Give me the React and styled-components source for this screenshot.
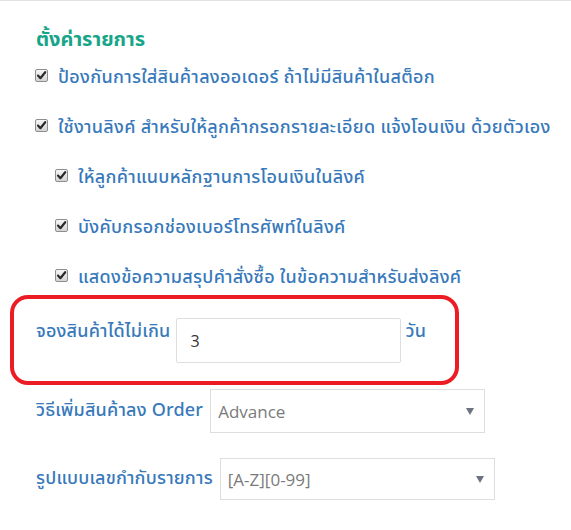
import React from 'react';
import styled, { createGlobalStyle } from 'styled-components';

const GlobalStyle = createGlobalStyle`
  body {
    margin: 0;
    background: #fff;
    border-top: 1px solid #e2e2e2;
  }
`;

const Page = styled.div`
  width: 571px;
  height: 529px;
  padding-left: 10px;
  box-sizing: border-box;
  font-family: "Noto Sans Thai", "Noto Sans Thai UI", "Noto Sans", sans-serif;
  overflow: hidden;
`;

const Title = styled.h2`
  margin: 26px 0 0 26px;
  font-size: 20px;
  line-height: 26px;
  font-weight: 700;
  color: #17a589;
`;

const Options = styled.div`
  padding-left: 25px;
  margin-top: 12px;
`;

const OptionRow = styled.label`
  display: flex;
  align-items: center;
  gap: 10px;
  height: 24px;
  margin-bottom: 26px;
  padding-left: ${p => (p.$sub ? 20 : 0)}px;
  font-size: 18px;
  letter-spacing: 0.3px;
  font-weight: 500;
  color: #3779ba;
  white-space: nowrap;
`;

const Box = styled.span`
  width: 13px;
  height: 13px;
  flex: none;
  box-sizing: border-box;
  border: 1px solid #8e8e8e;
  border-radius: 2px;
  background: linear-gradient(#f6f6f6, #d4d4d4);
  display: flex;
  align-items: center;
  justify-content: center;
  margin-top: -3px;
`;

const Check = () => (
  <Box>
    <svg width="11" height="11" viewBox="0 0 11 11">
      <path d="M2 5.6 L4.4 8.2 L9.2 2.2" fill="none" stroke="#2b2b2b" strokeWidth="2.2" strokeLinecap="round" strokeLinejoin="round" />
    </svg>
  </Box>
);

const ReserveBox = styled.div`
  width: 449px;
  margin-top: -20px;
  box-sizing: border-box;
  border: 4px solid #ec1c24;
  border-radius: 18px;
  padding: 19px 22px 18px;
  display: flex;
  align-items: flex-start;
  gap: ${p => p.$gap || 7}px;
`;

const FieldLabel = styled.span`
  font-size: 18px;
  letter-spacing: 0.2px;
  font-weight: 500;
  line-height: 28px;
  color: #3779ba;
  white-space: nowrap;
`;

const TextInput = styled.div`
  width: 225px;
  height: 45px;
  box-sizing: border-box;
  border: 1px solid #dedede;
  border-radius: 2px;
  padding-left: 14px;
  display: flex;
  align-items: center;
  font-family: "Open Sans", sans-serif;
  font-size: 16px;
  color: #333;
`;

const SelectRow = styled.div`
  display: flex;
  align-items: center;
  gap: 7px;
  margin: ${p => p.$top}px 0 0 26px;
`;

const Select = styled.div`
  width: 275px;
  height: ${p => p.$h}px;
  box-sizing: border-box;
  border: 1px solid #dedede;
  padding: 0 10px 0 7px;
  display: flex;
  align-items: center;
  justify-content: space-between;
  font-family: "Open Sans", sans-serif;
  font-size: 17px;
  color: #7a7a7a;
`;

const Arrow = styled.span`
  width: 0;
  height: 0;
  border-left: 4px solid transparent;
  border-right: 4px solid transparent;
  border-top: 7px solid #6b7280;
`;

const options = [
  { text: 'ป้องกันการใส่สินค้าลงออเดอร์ ถ้าไม่มีสินค้าในสต็อก' },
  { text: 'ใช้งานลิงค์ สำหรับให้ลูกค้ากรอกรายละเอียด แจ้งโอนเงิน ด้วยตัวเอง' },
  { text: 'ให้ลูกค้าแนบหลักฐานการโอนเงินในลิงค์', sub: true },
  { text: 'บังคับกรอกช่องเบอร์โทรศัพท์ในลิงค์', sub: true },
  { text: 'แสดงข้อความสรุปคำสั่งซื้อ ในข้อความสำหรับส่งลิงค์', sub: true },
];

export default function App() {
  return (
    <>
      <GlobalStyle />
      <Page>
        <Title>ตั้งค่ารายการ</Title>
        <Options>
          {options.map(o => (
            <OptionRow key={o.text} $sub={o.sub}>
              <Check />
              {o.text}
            </OptionRow>
          ))}
        </Options>
        <ReserveBox $gap={5}>
          <FieldLabel>จองสินค้าได้ไม่เกิน</FieldLabel>
          <TextInput>3</TextInput>
          <FieldLabel>วัน</FieldLabel>
        </ReserveBox>
        <SelectRow $top={4}>
          <FieldLabel>วิธีเพิ่มสินค้าลง Order</FieldLabel>
          <Select $h={44}>Advance<Arrow /></Select>
        </SelectRow>
        <SelectRow $top={25}>
          <FieldLabel>รูปแบบเลขกำกับรายการ</FieldLabel>
          <Select $h={42}>[A-Z][0-99]<Arrow /></Select>
        </SelectRow>
      </Page>
    </>
  );
}
